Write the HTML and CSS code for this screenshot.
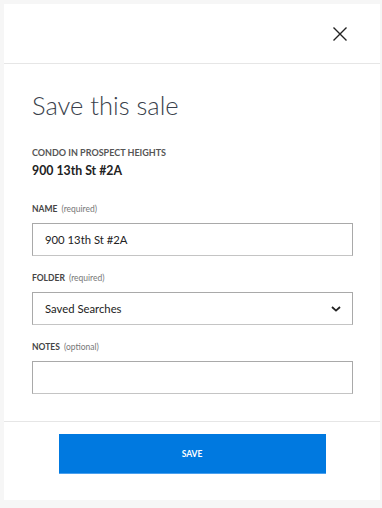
FILE: index.html
```html
<!DOCTYPE html>
<html lang="en">
<head>
  <meta charset="UTF-8">
  <meta name="viewport" content="width=device-width, initial-scale=1.0">
  <title>Save this sale</title>
  <link rel="stylesheet" href="styles.css">
</head>
<body>

  <div class="modal">
    <div class="modal-header">
      <button type="button" class="close-btn" aria-label="Close">
        <svg width="16" height="16" viewBox="0 0 16 16">
          <path d="M1.5 1.5 L14.5 14.5 M14.5 1.5 L1.5 14.5" stroke="#222" stroke-width="1.4" fill="none"/>
        </svg>
      </button>
    </div>

    <div class="modal-body">
      <h1>Save this sale</h1>
      <div class="listing-type">CONDO IN PROSPECT HEIGHTS</div>
      <div class="listing-address">900 13th St #2A</div>

      <form class="save-form">
        <label for="name" class="field-label">NAME <span class="hint">(required)</span></label>
        <input type="text" id="name" class="field-input" value="900 13th St #2A">

        <label for="folder" class="field-label">FOLDER <span class="hint">(required)</span></label>
        <div class="select-wrap">
          <select id="folder" class="field-input">
            <option>Saved Searches</option>
          </select>
          <svg class="chevron" width="10" height="6" viewBox="0 0 10 6">
            <path d="M1 1 L5 4.6 L9 1" stroke="#222" stroke-width="1.8" fill="none"/>
          </svg>
        </div>

        <label for="notes" class="field-label">NOTES <span class="hint">(optional)</span></label>
        <input type="text" id="notes" class="field-input">
      </form>
    </div>

    <div class="modal-footer">
      <button type="button" class="save-btn">SAVE</button>
    </div>
  </div>

</body>
</html>
```

FILE: styles.css
```css
/* Save modal */
body {
  font-family: Lato, "Open Sans", sans-serif;
  background-color: #f6f6f6;
  margin: 0;
  padding: 4px 2px 0 4px;
}

.modal {
  width: 376px;
  height: 496px;
  background-color: #fff;
  display: flex;
  flex-direction: column;
}

.modal-header {
  flex-shrink: 0;
  height: 60px;
  border-bottom: 1px solid #e6e6e6;
  display: flex;
  justify-content: flex-end;
  align-items: center;
  padding-right: 32px;
  box-sizing: border-box;
}

.close-btn {
  background: none;
  border: 0;
  padding: 0;
  width: 16px;
  height: 16px;
  cursor: pointer;
}

.modal-body {
  flex: 1;
  min-height: 0;
  padding: 24px 27px 0 28px;
}

h1 {
  font-size: 25.5px;
  font-weight: 300;
  color: #3a3f4b;
  margin: 0 0 24px 0;
  line-height: 34px;
}

.listing-type {
  font-size: 9px;
  font-weight: 700;
  color: #555;
  line-height: 14px;
}

.listing-address {
  font-size: 12.3px;
  font-weight: 700;
  color: #222;
  margin-top: 2px;
  line-height: 18px;
}

.save-form {
  display: flex;
  flex-direction: column;
  margin-top: 22px;
}

.field-label {
  font-size: 8.5px;
  font-weight: 700;
  color: #444;
  line-height: 14px;
  margin-bottom: 7px;
}

.hint {
  font-weight: 400;
  color: #777;
  margin-left: 2px;
}

.field-input {
  display: block;
  width: 321px;
  height: 33px;
  box-sizing: border-box;
  border: 1px solid #a9a9a9;
  border-bottom-color: #c4c4c4;
  border-radius: 0;
  background: #fff;
  padding: 0 12px;
  font-family: inherit;
  font-size: 11.3px;
  color: #222;
  margin: 0 0 15px 0;
  appearance: none;
  outline: none;
}

.select-wrap {
  position: relative;
}

.chevron {
  position: absolute;
  right: 12px;
  top: 14px;
  pointer-events: none;
}

.modal-footer {
  flex-shrink: 0;
  border-top: 1px solid #e6e6e6;
  height: 79px;
  display: flex;
  justify-content: center;
  align-items: flex-start;
  padding-top: 12px;
  box-sizing: border-box;
}

.save-btn {
  width: 267px;
  height: 40px;
  background-color: #0079e0;
  border: 0;
  border-bottom: 1px solid #4aa0ee;
  color: #fff;
  font-family: inherit;
  font-size: 8.5px;
  font-weight: 700;
  cursor: pointer;
}
```
